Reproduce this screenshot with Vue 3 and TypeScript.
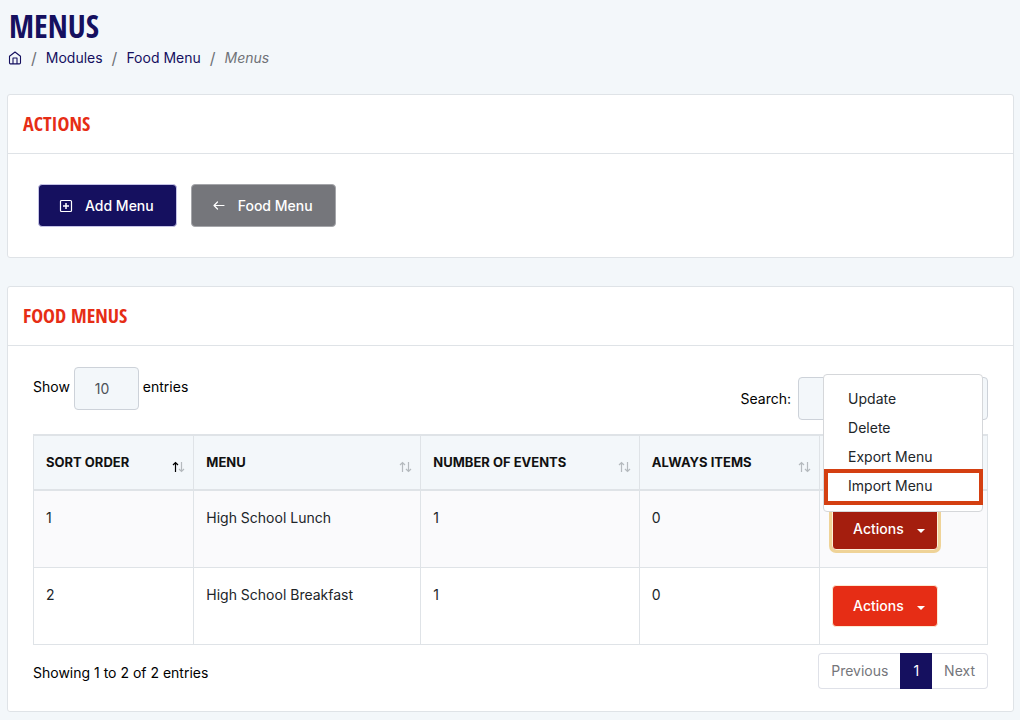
<script setup lang="ts">
import { ref } from 'vue'

interface FoodMenu {
  order: number
  name: string
  events: number
  always: number
}

const columns: string[] = ['Sort Order', 'Menu', 'Number of Events', 'Always Items']
const menus: FoodMenu[] = [
  { order: 1, name: 'High School Lunch', events: 1, always: 0 },
  { order: 2, name: 'High School Breakfast', events: 1, always: 0 },
]
const menuActions: string[] = ['Update', 'Delete', 'Export Menu', 'Import Menu']
const openRow = ref<number | null>(1)
const pageSize = ref('10')
const search = ref('')

function toggle(order: number) {
  openRow.value = openRow.value === order ? null : order
}
</script>

<template>
  <main class="page">
    <header class="page-head">
      <h1>MENUS</h1>
      <nav class="crumbs" aria-label="Breadcrumb">
        <a href="#" aria-label="Home">
          <svg width="14" height="14" viewBox="0 0 14 14" fill="none" stroke="currentColor" stroke-width="1.1" stroke-linejoin="round">
            <path d="M1.5 5.3 7 1l5.500 4.300v6.400a1.200 1.200 0 0 1-1.200 1.200H2.700a1.200 1.200 0 0 1-1.200-1.200z" />
            <path d="M5 12.900V7h4v5.900" />
          </svg>
        </a>
        <span class="slash">/</span>
        <a href="#">Modules</a>
        <span class="slash">/</span>
        <a href="#">Food Menu</a>
        <span class="slash">/</span>
        <em>Menus</em>
      </nav>
    </header>

    <section class="card">
      <h2>ACTIONS</h2>
      <div class="buttons">
        <button type="button" class="btn navy">
          <svg width="14" height="14" viewBox="0 0 14 14" fill="none" stroke="currentColor" stroke-width="1.2">
            <rect x="1.500" y="1.500" width="11" height="11" rx="1" />
            <path d="M7 4v6M4 7h6" stroke-width="1.500" />
          </svg>
          Add Menu
        </button>
        <button type="button" class="btn grey">
          <svg width="14" height="14" viewBox="0 0 14 14" fill="none" stroke="currentColor" stroke-width="1.2" stroke-linecap="round" stroke-linejoin="round">
            <path d="M12 6.500H2M5.500 3 2 6.500 5.500 10" />
          </svg>
          Food Menu
        </button>
      </div>
    </section>

    <section class="card">
      <h2>FOOD MENUS</h2>
      <div class="content">
        <div class="tools">
          <div class="field show">
            <label for="page-size">Show</label>
            <select id="page-size" v-model="pageSize">
              <option>10</option>
              <option>25</option>
              <option>50</option>
            </select>
            <label for="page-size">entries</label>
          </div>
          <div class="field search">
            <label for="search">Search:</label>
            <input id="search" v-model="search" type="search" />
          </div>
        </div>

        <table>
          <colgroup>
            <col class="c-order" />
            <col class="c-menu" />
            <col class="c-events" />
            <col class="c-always" />
            <col />
          </colgroup>
          <thead>
            <tr>
              <th v-for="(col, i) in columns" :key="col" scope="col">
                <div class="th">
                  {{ col }}
                  <svg :class="{ sorted: i === 0 }" width="13" height="12" viewBox="0 0 13 12" fill="none" stroke-width="1.200">
                    <path class="up" d="M3.500 11V1.500M1 4l2.500-2.500L6 4" />
                    <path class="down" d="M9.500 1v9.500M7 8l2.500 2.500L12 8" />
                  </svg>
                </div>
              </th>
              <th aria-label="Actions"></th>
            </tr>
          </thead>
          <tbody>
            <tr v-for="m in menus" :key="m.order">
              <td>{{ m.order }}</td>
              <td>{{ m.name }}</td>
              <td>{{ m.events }}</td>
              <td>{{ m.always }}</td>
              <td class="action-cell">
                <div class="dropdown">
                  <button
                    type="button"
                    class="btn red"
                    :class="{ open: openRow === m.order }"
                    :aria-expanded="openRow === m.order"
                    @click="toggle(m.order)"
                  >
                    Actions
                    <span class="caret"></span>
                  </button>
                  <div v-if="openRow === m.order" class="menu">
                    <a v-for="a in menuActions" :key="a" href="#" :class="{ marked: a === 'Import Menu' }">{{ a }}</a>
                  </div>
                </div>
              </td>
            </tr>
          </tbody>
        </table>

        <div class="foot">
          <span>Showing 1 to 2 of 2 entries</span>
          <nav class="pager" aria-label="Pages">
            <button type="button">Previous</button>
            <button type="button" class="current">1</button>
            <button type="button">Next</button>
          </nav>
        </div>
      </div>
    </section>
  </main>
</template>

<style>
body {
  margin: 0;
  background: #f3f7fa;
}
</style>

<style scoped>
* {
  box-sizing: border-box;
}
.page {
  padding: 6px 6px 7px 7px;
  font-family: Inter, "Open Sans", sans-serif;
  font-size: 14px;
  line-height: 22px;
  color: #000;
}
h1,
h2 {
  margin: 0;
  font-family: "Liberation Sans Narrow", "Open Sans Condensed", "DejaVu Sans Condensed", sans-serif;
  font-weight: 700;
}
h1 {
  padding-left: 2px;
  font-size: 32px;
  line-height: 40px;
  color: #15105f;
}
.crumbs {
  display: flex;
  align-items: center;
  gap: 9px;
  height: 24px;
  padding-left: 1px;
  color: #6f7277;
}
.crumbs a {
  color: #15105f;
  text-decoration: none;
}
.crumbs svg {
  display: block;
}
.slash {
  font-size: 16px;
}
.page-head {
  margin-bottom: 24px;
}
.card {
  border: 1px solid #dfe3e7;
  border-radius: 3px;
  background: #fff;
}
.card + .card {
  margin-top: 28px;
}
h2 {
  padding: 14px 15px;
  border-bottom: 1px solid #dfe3e7;
  font-size: 20px;
  line-height: 30px;
  color: #e62d15;
}
.buttons {
  display: flex;
  gap: 14px;
  padding: 30px;
}
.btn {
  display: flex;
  align-items: center;
  height: 43px;
  padding: 0 22px 0 20px;
  border: 1px solid;
  border-radius: 4px;
  font: 500 14px/22px Inter, "Open Sans", sans-serif;
  color: #fff;
}
.btn svg {
  margin-right: 12px;
}
.navy {
  border-color: #c5c3e6;
  background: #15105f;
}
.grey {
  border-color: #a5a6aa;
  background: #75767b;
}
.content {
  padding: 21px 25px 22px;
}
.tools {
  display: flex;
  justify-content: space-between;
  align-items: flex-start;
  margin-bottom: 14px;
}
.field {
  display: flex;
  align-items: center;
  gap: 4px;
}
.show label {
  padding-bottom: 3px;
}
.search {
  gap: 7px;
  margin-top: 10px;
}
select,
input {
  height: 43px;
  border: 1px solid #cdd2d9;
  border-radius: 4px;
  background: #f3f7fa;
  font: inherit;
  color: #4d5258;
}
select {
  width: 65px;
  padding: 0 20px;
  appearance: none;
}
input {
  width: 190px;
  padding: 0 12px;
}
table {
  width: 100%;
  border-collapse: collapse;
  table-layout: fixed;
}
.c-order {
  width: 16.8%;
}
.c-menu {
  width: 23.8%;
}
.c-events {
  width: 22.9%;
}
.c-always {
  width: 18.9%;
}
th,
td {
  border: 1px solid #dfe3e7;
  padding: 15px 12px;
  text-align: left;
  vertical-align: top;
}
th {
  height: 55px;
  border-top-width: 2px;
  border-bottom-width: 2px;
  background: #f3f7fa;
  font-size: 13px;
  font-weight: 700;
  text-transform: uppercase;
  white-space: nowrap;
  color: #111;
}
.th {
  display: flex;
  justify-content: space-between;
}
.th svg {
  flex: none;
  margin: 10px -4px 0 0;
  stroke: #b5babe;
}
.th .sorted .up {
  stroke: #000;
}
td {
  height: 77px;
  padding: 16px 12px;
  color: #212529;
}
tbody tr:first-child td {
  background: #fafafc;
}
td.action-cell {
  padding: 17px 12px;
}
.dropdown {
  position: relative;
  width: 106px;
}
.red {
  width: 100%;
  height: 42px;
  justify-content: space-between;
  padding: 0 12px 0 20px;
  border-color: #fce9d2;
  background: #e62d15;
}
.red.open {
  border-color: #fff0da;
  background: #a41e0e;
  box-shadow: 0 0 0 3px #efd398;
}
.caret {
  margin-top: 4px;
  border: 4px solid transparent;
  border-top-color: #fff;
  border-bottom: 0;
}
.menu {
  position: absolute;
  z-index: 2;
  bottom: 38px;
  left: -9px;
  width: 160px;
  padding: 9px 0 11px;
  border: 1px solid #d5d7da;
  border-radius: 4px;
  background: #fff;
}
.menu a {
  position: relative;
  display: block;
  padding: 4px 24px 3px;
  color: #212529;
  text-decoration: none;
}
.menu .marked::after {
  content: "";
  position: absolute;
  inset: -2px -1px -5px 0;
  border: 4px solid #d43f11;
}
.foot {
  display: flex;
  justify-content: space-between;
  align-items: center;
  margin-top: 8px;
}
.foot > span {
  padding-top: 4px;
}
.pager {
  display: flex;
}
.pager button {
  height: 36px;
  padding: 0 12px;
  border: 1px solid #dfe1e8;
  background: #fff;
  font: inherit;
  color: #75767b;
}
.pager button:first-child {
  border-right: 0;
  border-radius: 4px 0 0 4px;
}
.pager button:last-child {
  border-left: 0;
  border-radius: 0 4px 4px 0;
}
.pager .current {
  border-color: #15105f;
  background: #15105f;
  color: #fff;
}
</style>
